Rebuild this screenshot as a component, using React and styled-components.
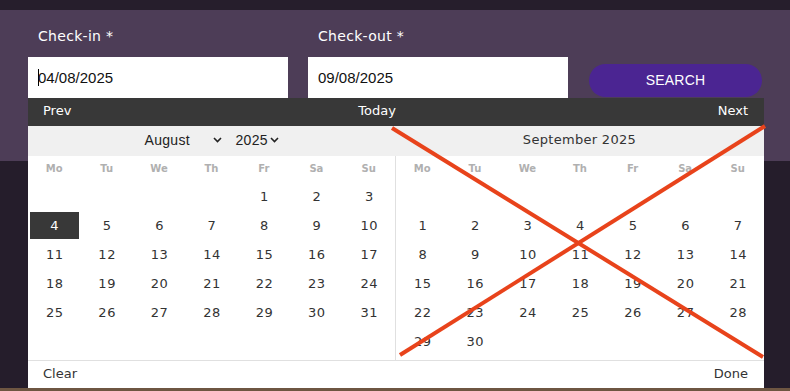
import styled, { createGlobalStyle } from "styled-components";

const GlobalStyle = createGlobalStyle`
  html, body {
    margin: 0;
    padding: 0;
    background: #251d2b;
    overflow: hidden;
  }
`;

const display = `"DejaVu Sans", "Open Sans", sans-serif`;

const Page = styled.div`
  position: relative;
  width: 790px;
  height: 391px;
  display: flex;
  flex-direction: column;
  background: #251d2b;
`;

const TopStrip = styled.div`
  height: 10px;
  background: #261e2c;
`;

const SearchPanel = styled.div`
  height: 151px;
  background: #4d3d57;
  display: flex;
  align-items: flex-start;
  gap: 20px;
  padding: 0 28px;
  box-sizing: border-box;
`;

const Field = styled.div`
  width: 260px;
  display: flex;
  flex-direction: column;
`;

const Label = styled.label`
  font-family: ${display};
  font-size: 14px;
  color: #fff;
  height: 47px;
  line-height: 52px;
  padding-left: 10px;
  letter-spacing: 0.3px;
`;

const DateInput = styled.div`
  height: 41px;
  background: #fff;
  display: flex;
  align-items: center;
  padding-left: 10px;
  font-family: "Liberation Sans", Arial, sans-serif;
  font-size: 15px;
  color: #111;
`;

const Caret = styled.span`
  display: inline-block;
  width: 1px;
  height: 17px;
  background: #000;
  margin-right: -1px;
`;

const SearchButton = styled.button`
  margin-top: 54px;
  margin-left: 1px;
  width: 173px;
  height: 33px;
  padding: 0 0 2px;
  border: none;
  border-radius: 17px;
  background: #4b2592;
  color: #fff;
  font-family: "Liberation Sans", Arial, sans-serif;
  font-size: 14px;
  letter-spacing: 0.2px;
`;

const Hero = styled.div`
  flex: 1;
  background: linear-gradient(to bottom, #251d2b 0, #251d2b calc(100% - 3px), #6e5642 calc(100% - 3px));
`;

const Picker = styled.div`
  position: absolute;
  left: 28px;
  top: 98px;
  width: 736px;
  height: 290px;
  background: #fff;
  display: flex;
  flex-direction: column;
  font-family: ${display};
`;

const NavBar = styled.div`
  height: 28px;
  box-sizing: border-box;
  padding: 0 16px 4px 15px;
  background: #383838;
  color: #fff;
  font-size: 13px;
  display: flex;
  align-items: center;
  justify-content: space-between;
`;

const TodayLink = styled.span`
  margin-right: 35px;
`;

const Months = styled.div`
  display: flex;
  flex: 1;
`;

const Month = styled.div`
  width: ${(p) => p.$width}px;
  display: flex;
  flex-direction: column;
`;

const MonthHeader = styled.div`
  height: 30px;
  box-sizing: border-box;
  padding-bottom: 3px;
  background: #f0f0f0;
  display: flex;
  align-items: center;
  justify-content: center;
  gap: 14px;
  font-size: 13px;
  color: #333;
  letter-spacing: 0.3px;
`;

const FakeSelect = styled.span`
  width: ${(p) => p.$width}px;
  display: flex;
  align-items: center;
  justify-content: space-between;
  font-family: "Liberation Sans", Arial, sans-serif;
  font-size: 14px;
  color: #222;
`;

const MonthBody = styled.div`
  flex: 1;
  border-left: ${(p) => (p.$divider ? "1px solid #e0e0e0" : "none")};
`;

const Grid = styled.div`
  display: grid;
  grid-template-columns: repeat(7, 1fr);
  grid-auto-rows: ${(p) => p.$row}px;
  margin-top: ${(p) => p.$top || 0}px;
`;

const WeekDay = styled.div`
  display: flex;
  align-items: center;
  justify-content: center;
  font-size: 10px;
  font-weight: bold;
  color: #b0b0b0;
`;

const Day = styled.div`
  display: flex;
  align-items: center;
  justify-content: center;
  margin: 1px 1px 1px 2px;
  font-size: 13px;
  letter-spacing: 0.5px;
  color: ${(p) => (p.$active ? "#fff" : "#333")};
  background: ${(p) => (p.$active ? "#383838" : "transparent")};
`;

const Footer = styled.div`
  height: 28px;
  box-sizing: border-box;
  padding: 0 16px 2px 15px;
  border-top: 1px solid #e0e0e0;
  display: flex;
  align-items: center;
  justify-content: space-between;
  font-size: 13px;
  color: #333;
`;

const Cross = styled.svg`
  position: absolute;
  left: 0;
  top: 0;
  pointer-events: none;
`;

const Chevron = () => (
  <svg width="9" height="6" viewBox="0 0 9 6">
    <path d="M1 1l3.5 3.5L8 1" fill="none" stroke="#222" strokeWidth="1.6" />
  </svg>
);

const weekDays = ["Mo", "Tu", "We", "Th", "Fr", "Sa", "Su"];

function MonthGrid({ lead, count, selected, divider }) {
  const cells = [];
  for (let i = 0; i < lead; i++) cells.push(null);
  for (let d = 1; d <= count; d++) cells.push(d);
  return (
    <MonthBody $divider={divider}>
      <Grid $row={24}>
        {weekDays.map((w) => (
          <WeekDay key={w}>{w}</WeekDay>
        ))}
      </Grid>
      <Grid $row={29} $top={2}>
        {cells.map((d, i) =>
          d ? (
            <Day key={i} $active={d === selected}>
              {d}
            </Day>
          ) : (
            <div key={i} />
          )
        )}
      </Grid>
    </MonthBody>
  );
}

export default function App() {
  return (
    <Page>
      <GlobalStyle />
      <TopStrip />
      <SearchPanel>
        <Field>
          <Label>Check-in *</Label>
          <DateInput>
            <Caret />
            04/08/2025
          </DateInput>
        </Field>
        <Field>
          <Label>Check-out *</Label>
          <DateInput>09/08/2025</DateInput>
        </Field>
        <SearchButton>SEARCH</SearchButton>
      </SearchPanel>
      <Hero />

      <Picker>
        <NavBar>
          <span>Prev</span>
          <TodayLink>Today</TodayLink>
          <span>Next</span>
        </NavBar>
        <Months>
          <Month $width={367}>
            <MonthHeader>
              <FakeSelect $width={77}>
                August <Chevron />
              </FakeSelect>
              <FakeSelect $width={43}>
                2025 <Chevron />
              </FakeSelect>
            </MonthHeader>
            <MonthGrid lead={4} count={31} selected={4} />
          </Month>
          <Month $width={369}>
            <MonthHeader>September 2025</MonthHeader>
            <MonthGrid lead={7} count={30} divider />
          </Month>
        </Months>
        <Footer>
          <span>Clear</span>
          <span>Done</span>
        </Footer>
      </Picker>

      <Cross width="790" height="391">
        <line x1="392" y1="128" x2="763" y2="357" stroke="#e8431b" strokeWidth="4" />
        <line x1="400" y1="355" x2="765" y2="126" stroke="#e8431b" strokeWidth="4" />
      </Cross>
    </Page>
  );
}
